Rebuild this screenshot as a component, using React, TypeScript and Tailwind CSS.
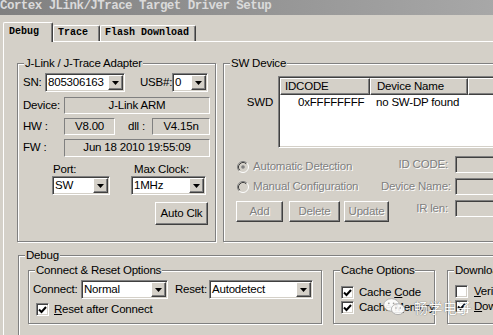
import React from 'react';

const sunken =
  'border border-t-[#808080] border-l-[#808080] border-b-white border-r-white shadow-[inset_1px_1px_0_#404040,inset_-1px_-1px_0_#d4d0c8]';
const raised =
  'border border-t-white border-l-white border-b-[#404040] border-r-[#404040] shadow-[inset_-1px_-1px_0_#808080]';
const etched = 'border border-[#808080] shadow-[inset_1px_1px_0_#fff,1px_1px_0_#fff]';
const disabledText = 'text-[#808080] [text-shadow:1px_1px_0_#fff]';

type GroupProps = { label: string; className: string; children?: React.ReactNode };

const Group: React.FC<GroupProps> = ({ label, className, children }) => (
  <div className={`relative shrink-0 ${etched} ${className}`}>
    <span className="absolute -top-[8px] left-[6px] whitespace-nowrap bg-[#d4d0c8] px-[1px] leading-[14px]">{label}</span>
    {children}
  </div>
);

const DropArrow: React.FC = () => (
  <span className={`flex h-full w-[15px] shrink-0 items-center justify-center bg-[#d4d0c8] ${raised}`}>
    <svg width="7" height="4" viewBox="0 0 7 4">
      <path d="M0 0h7L3.5 4z" fill="#000" />
    </svg>
  </span>
);

const Combo: React.FC<{ value: string; className: string }> = ({ value, className }) => (
  <div className={`flex h-[19px] shrink-0 bg-white p-[1px] ${sunken} ${className}`}>
    <span className="flex-1 overflow-hidden whitespace-nowrap pl-[1px] leading-[15px]">{value}</span>
    <DropArrow />
  </div>
);

const Field: React.FC<{ value: string; className: string }> = ({ value, className }) => (
  <div
    className={`flex shrink-0 items-center justify-center whitespace-nowrap border border-t-[#808080] border-l-[#808080] border-b-white border-r-white ${className}`}
  >
    {value}
  </div>
);

const Btn: React.FC<{ label: string; className: string; disabled?: boolean }> = ({ label, className, disabled }) => (
  <div
    className={`flex shrink-0 items-center justify-center bg-[#d4d0c8] ${raised} ${disabled ? disabledText : ''} ${className}`}
  >
    {label}
  </div>
);

const Check: React.FC<{ checked?: boolean }> = ({ checked }) => (
  <span className={`flex h-[13px] w-[13px] shrink-0 items-center justify-center bg-white ${sunken}`}>
    {checked && (
      <svg width="9" height="8" viewBox="0 0 9 8">
        <polyline points="1,3.5 3.5,6 8,1" fill="none" stroke="#000" strokeWidth="2" />
      </svg>
    )}
  </span>
);

const Radio: React.FC<{ on?: boolean }> = ({ on }) => (
  <svg width="12" height="12" viewBox="0 0 12 12" className="shrink-0">
    <circle cx="6" cy="6" r="5" fill="#d4d0c8" />
    <path d="M9.89 2.11A5.5 5.5 0 0 0 2.11 9.89" stroke="#808080" fill="none" />
    <path d="M2.11 9.89A5.5 5.5 0 0 0 9.89 2.11" stroke="#fff" fill="none" />
    <path d="M9.18 2.82A4.5 4.5 0 0 0 2.82 9.18" stroke="#404040" fill="none" />
    {on && <circle cx="6" cy="6" r="1.8" fill="#808080" />}
  </svg>
);

const Tab: React.FC<{ label: string; active?: boolean; className: string }> = ({ label, active, className }) =>
  active ? (
    <div
      className={`relative z-10 -mb-[1px] h-[20px] rounded-t-[2px] border-l border-r border-t border-white border-r-[#404040] bg-[#d4d0c8] pl-[5px] pt-[3px] leading-[12px] shadow-[inset_-1px_0_0_#808080] ${className}`}
    >
      {label}
    </div>
  ) : (
    <div
      className={`h-[16px] rounded-t-[2px] border-l border-r border-t border-white border-r-[#404040] pl-[4px] pt-[1px] leading-[12px] shadow-[inset_-1px_0_0_#808080] ${className}`}
    >
      {label}
    </div>
  );

export default function App() {
  return (
    <div className="relative h-[335px] w-[493px] overflow-hidden bg-[#d4d0c8] font-['Liberation_Sans',Arial,sans-serif] text-[11.5px] tracking-[-0.2px] text-black">
      <div className="w-[620px]">
        {/* caption */}
        <div className="h-[15px] overflow-hidden bg-linear-to-r from-[#808080] to-[#b2b2b2]">
          <div className="-mt-[1px] whitespace-nowrap font-['Liberation_Mono',monospace] text-[12.5px] font-bold leading-[14px] tracking-[-0.55px] text-[#dadada]">
            Cortex JLink/JTrace Target Driver Setup
          </div>
        </div>

        {/* tabs */}
        <div className="flex items-end pl-[3px] pt-[7px] font-['Liberation_Mono',monospace] text-[10px] font-bold tracking-normal">
          <Tab label="Debug" active className="w-[50px]" />
          <Tab label="Trace" className="w-[47px]" />
          <Tab label="Flash Download" className="w-[96px]" />
        </div>

        {/* tab page */}
        <div className="ml-[3px] h-[300px] border-l border-t border-white pl-[13px] pt-[21px]">
          <div className="flex">
            <Group label="J-Link / J-Trace Adapter" className="h-[179px] w-[199px] pl-[5px] pt-[9px]">
              <div className="flex h-[19px] items-center">
                <span className="w-[22px]">SN:</span>
                <Combo value="805306163" className="w-[80px]" />
                <span className="ml-[15px] w-[32px]">USB#:</span>
                <Combo value="0" className="w-[36px]" />
              </div>
              <div className="mt-[5px] flex h-[17px] items-center">
                <span className="w-[41px]">Device:</span>
                <Field value="J-Link ARM" className="h-[17px] w-[146px]" />
              </div>
              <div className="mt-[4px] flex h-[17px] items-center">
                <span className="w-[41px]">HW :</span>
                <Field value="V8.00" className="h-[17px] w-[51px]" />
                <span className="ml-[13px] w-[24px]">dll :</span>
                <Field value="V4.15n" className="h-[17px] w-[58px]" />
              </div>
              <div className="mt-[4px] flex h-[18px] items-center">
                <span className="w-[41px]">FW :</span>
                <Field value="Jun 18 2010 19:55:09" className="h-[18px] w-[146px]" />
              </div>
              <div className="mt-[6px] flex h-[13px] items-center leading-[13px]">
                <span className="ml-[30px] w-[81px]">Port:</span>
                <span>Max Clock:</span>
              </div>
              <div className="flex">
                <Combo value="SW" className="ml-[29px] w-[58px]" />
                <Combo value="1MHz" className="ml-[21px] w-[75px]" />
              </div>
              <Btn label="Auto Clk" className="ml-[132px] mt-[7px] h-[23px] w-[53px]" />
            </Group>

            <Group label="SW Device" className="ml-[7px] h-[179px] w-[300px] pt-[12px]">
              <div className="flex">
                <span className="w-[54px] shrink-0 pr-[5px] pt-[19px] text-right leading-[14px]">SWD</span>
                <div className={`h-[72px] w-[260px] shrink-0 bg-white p-[1px] ${sunken}`}>
                  <div className="flex h-[17px]">
                    <span className={`flex w-[90px] shrink-0 items-center bg-[#d4d0c8] pl-[4px] ${raised}`}>IDCODE</span>
                    <span className={`flex w-[98px] shrink-0 items-center bg-[#d4d0c8] pl-[6px] ${raised}`}>Device Name</span>
                    <span className={`flex-1 bg-[#d4d0c8] ${raised}`} />
                  </div>
                  <div className="flex h-[15px] items-center">
                    <span className="w-[90px] shrink-0 pl-[18px]">0xFFFFFFFF</span>
                    <span className="pl-[6px]">no SW-DP found</span>
                  </div>
                </div>
              </div>

              <div className="mt-[8px] flex">
                <div className="w-[157px] shrink-0 pl-[12px] pt-[3px]">
                  <div className="flex h-[16px] items-center">
                    <span className="ml-[1px]">
                      <Radio on />
                    </span>
                    <span className={`ml-[4px] whitespace-nowrap ${disabledText}`}>Automatic Detection</span>
                  </div>
                  <div className="mt-[4px] flex h-[16px] items-center">
                    <span className="ml-[1px]">
                      <Radio />
                    </span>
                    <span className={`ml-[4px] whitespace-nowrap ${disabledText}`}>Manual Configuration</span>
                  </div>
                  <div className="mt-[6px] flex">
                    <Btn label="Add" disabled className="h-[21px] w-[47px]" />
                    <Btn label="Delete" disabled className="ml-[6px] h-[21px] w-[51px]" />
                    <Btn label="Update" disabled className="ml-[4px] h-[21px] w-[45px]" />
                  </div>
                </div>
                <div className="flex flex-col gap-[5px]">
                  {['ID CODE:', 'Device Name:', 'IR len:'].map((l) => (
                    <div key={l} className="flex h-[17px] items-center">
                      <span className={`w-[67px] shrink-0 whitespace-nowrap text-right ${disabledText}`}>{l}</span>
                      <span className={`ml-[7px] h-[17px] w-[100px] shrink-0 bg-[#d4d0c8] ${sunken}`} />
                    </div>
                  ))}
                </div>
              </div>
            </Group>
          </div>

          <Group label="Debug" className="ml-[1px] mt-[13px] flex h-[100px] w-[560px] items-start pl-[9px] pt-[14px]">
            <Group label="Connect & Reset Options" className="h-[54px] w-[294px] pl-[4px] pt-[9px]">
              <div className="flex h-[19px] items-center">
                <span className="w-[48px]">Connect:</span>
                <Combo value="Normal" className="w-[87px]" />
                <span className="ml-[7px] w-[34px]">Reset:</span>
                <Combo value="Autodetect" className="w-[104px]" />
              </div>
              <div className="mt-[4px] flex h-[13px] items-center">
                <span className="ml-[3px]">
                  <Check checked />
                </span>
                <span className="ml-[5px] whitespace-nowrap">
                  <span className="underline">R</span>eset after Connect
                </span>
              </div>
            </Group>

            <Group label="Cache Options" className="ml-[11px] h-[54px] w-[102px] pl-[7px] pt-[15px]">
              <div className="flex h-[13px] items-center">
                <Check checked />
                <span className="ml-[5px] whitespace-nowrap">
                  Cache <span className="underline">C</span>ode
                </span>
              </div>
              <div className="mt-[2px] flex h-[13px] items-center">
                <Check checked />
                <span className="ml-[5px] whitespace-nowrap">
                  Cache <span className="underline">M</span>emory
                </span>
              </div>
            </Group>

            <Group label="Download Function" className="ml-[12px] h-[54px] w-[120px] pl-[7px] pt-[14px]">
              <div className="flex h-[13px] items-center">
                <Check />
                <span className="ml-[6px] whitespace-nowrap">
                  <span className="underline">V</span>erify Code Download
                </span>
              </div>
              <div className="mt-[2px] flex h-[13px] items-center">
                <Check checked />
                <span className="ml-[6px] whitespace-nowrap">
                  <span className="underline">D</span>ownload to Flash
                </span>
              </div>
            </Group>
          </Group>
        </div>
      </div>

      {/* watermark */}
      <div className="pointer-events-none absolute left-[383px] top-[298px] flex items-center opacity-90">
        <svg width="23" height="18" viewBox="0 0 23 18">
          <ellipse cx="8.5" cy="7" rx="7.8" ry="6.3" fill="#fff" stroke="#a0a0a0" strokeWidth="0.8" />
          <ellipse cx="15" cy="11.2" rx="6.6" ry="5.4" fill="#fff" stroke="#a0a0a0" strokeWidth="0.8" />
          <circle cx="5.8" cy="5.3" r="0.9" fill="#9a9a9a" />
          <circle cx="10.6" cy="5.3" r="0.9" fill="#9a9a9a" />
          <circle cx="13" cy="10" r="0.7" fill="#9a9a9a" />
          <circle cx="17.2" cy="10" r="0.7" fill="#9a9a9a" />
        </svg>
        <span className="ml-[8px] font-['Noto_Sans_CJK_SC',sans-serif] text-[14px] leading-none tracking-[0.5px] text-white [text-shadow:0_0_1px_#777,0_0_1px_#777]">
          畅学电子
        </span>
      </div>
    </div>
  );
}
